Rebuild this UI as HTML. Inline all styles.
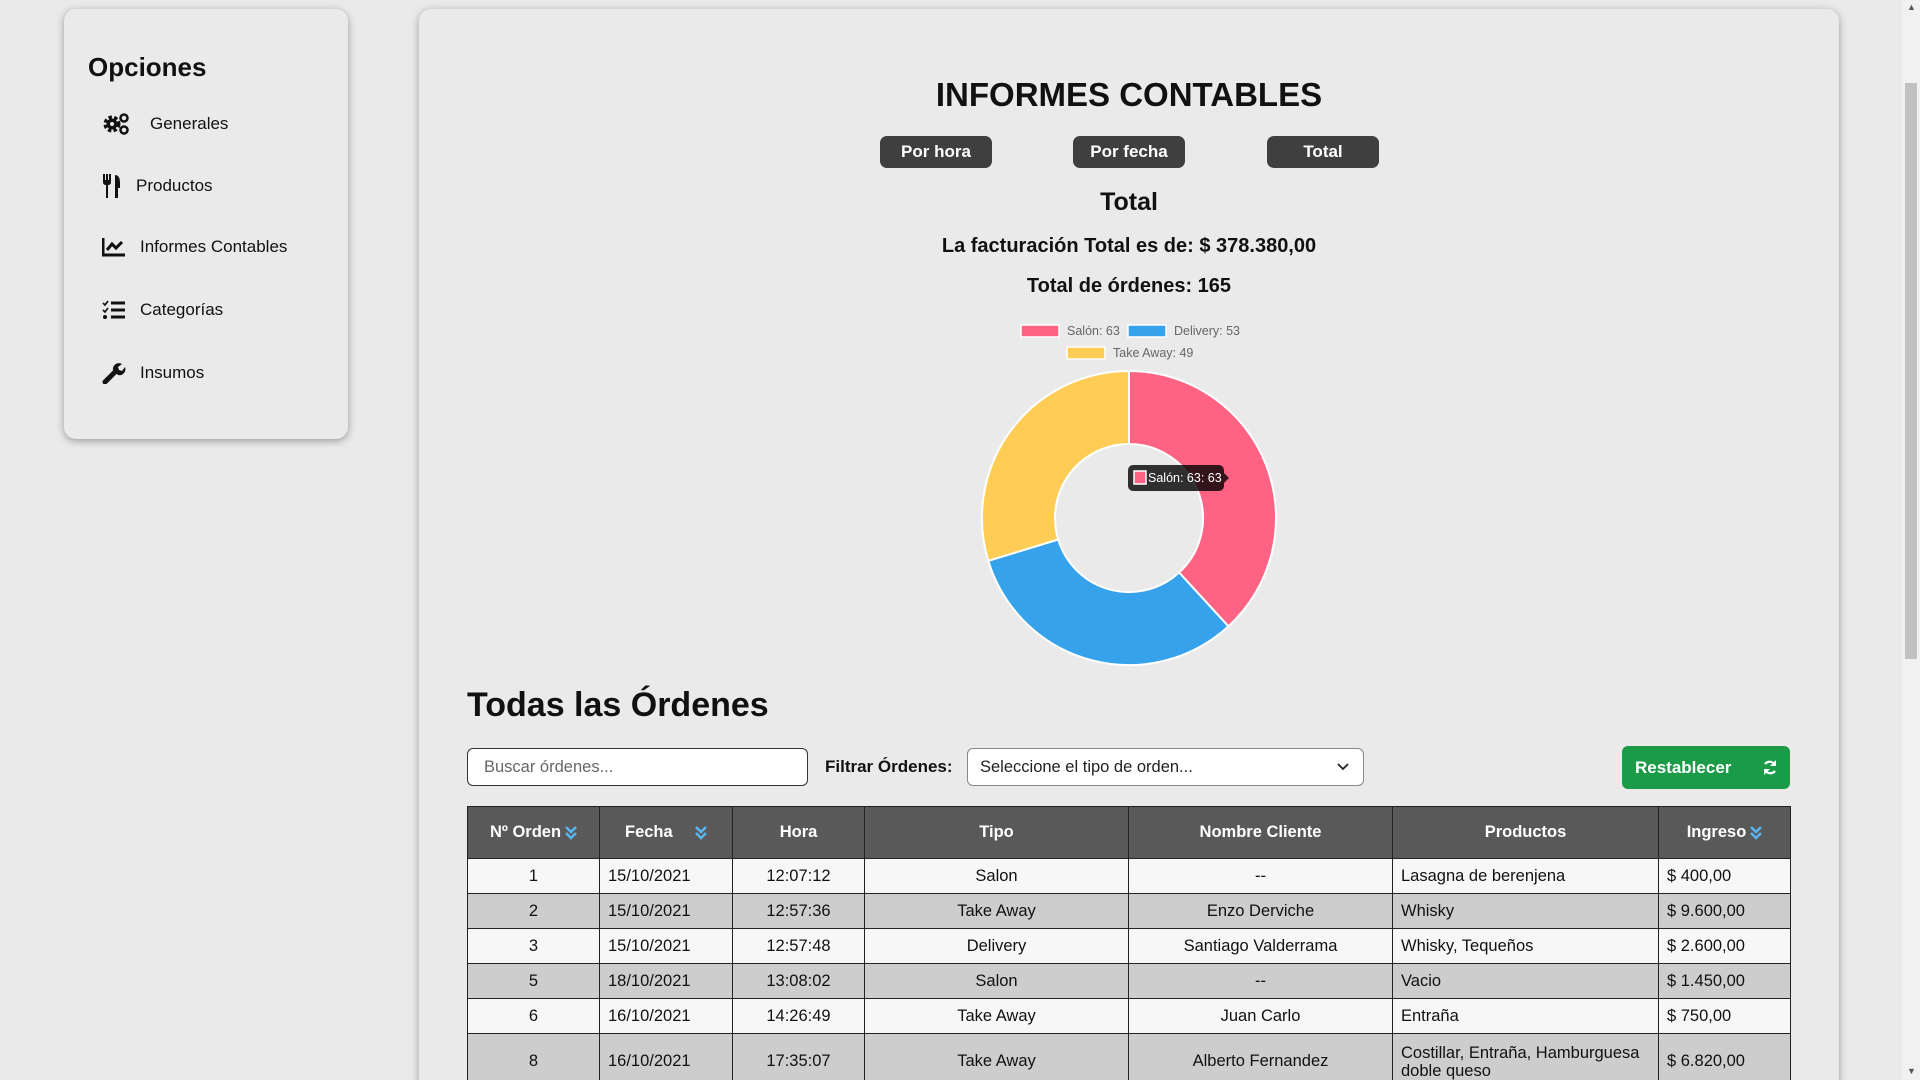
<!DOCTYPE html>
<html><head><meta charset="utf-8">
<style>
*{margin:0;padding:0;box-sizing:border-box}
html{width:1920px;height:1080px;overflow:hidden}
body{width:1920px;height:1080px;overflow:hidden;background:#eaeaea;font-family:"Liberation Sans",sans-serif;color:#111;position:relative}
.abs{position:absolute}
.side{left:64px;top:9px;width:284px;height:430px;background:#eaeaea;border-radius:12px;box-shadow:0 2px 8px rgba(0,0,0,.35)}
.side h2{position:absolute;left:24px;top:43px;font-size:26px;font-weight:bold}
.item{position:absolute;left:38px;font-size:17px;display:flex;align-items:center}
.item svg{margin-right:14px}
.main{left:419px;top:9px;width:1420px;height:1090px;background:#eaeaea;border-radius:12px;box-shadow:0 2px 8px rgba(0,0,0,.35)}
.c{position:absolute;left:419px;width:1420px;text-align:center;font-weight:bold}
.btn{position:absolute;top:136px;width:112px;height:32px;background:#3f3f3f;color:#fff;border-radius:7px;font-weight:bold;font-size:17px;text-align:center;line-height:32px}
.sb{left:1902px;top:0;width:18px;height:1080px;background:#f1f1f1}
.tw{position:absolute;left:467px;top:806px;width:1330px;height:274px;overflow:hidden}
table{border-collapse:collapse;font-size:16.5px}
td,th{border:1.5px solid #222;height:35px;padding:0 8px;text-align:center}
th{background:#595959;color:#fff;height:52px;font-size:16.5px}
tr.a td{background:#f7f7f7}tr.b td{background:#cdcdcd}
td.l{text-align:left}
.ch{vertical-align:middle;margin-left:4px}
</style></head><body>
<div class="abs side">
<h2>Opciones</h2>
<div class="item" style="top:104px"><svg width="28" height="22" viewBox="0 0 28 22"><circle cx="10" cy="11" r="6" fill="none" stroke="#111" stroke-width="5" stroke-dasharray="3 2"/><circle cx="10" cy="11" r="5.5" fill="#111"/><circle cx="10" cy="11" r="2" fill="#eaeaea"/><circle cx="22" cy="5" r="3.5" fill="none" stroke="#111" stroke-width="2.5"/><circle cx="22" cy="17" r="3.5" fill="none" stroke="#111" stroke-width="2.5"/></svg><span style="margin-left:6px">Generales</span></div>
<div class="item" style="top:165px"><svg width="20" height="24" viewBox="0 0 20 24"><path d="M1 0h2v6h1V0h2v6h1V0h2v8q0 3-3 3v13H4V11Q1 11 1 8Z" fill="#111"/><path d="M13 24V1q5 0 5 8v5h-2v10Z" fill="#111"/></svg>Productos</div>
<div class="item" style="top:228px"><svg width="24" height="20" viewBox="0 0 24 20"><path d="M1 1v17h22" fill="none" stroke="#111" stroke-width="3"/><path d="M5 13l5-6 4 4 6-6" fill="none" stroke="#111" stroke-width="3"/></svg>Informes Contables</div>
<div class="item" style="top:291px"><svg width="24" height="20" viewBox="0 0 24 20"><path d="M1 3l2 2 3-4M1 10l2 2 3-4" fill="none" stroke="#111" stroke-width="1.6"/><circle cx="3" cy="17" r="2" fill="#111"/><path d="M9 3h14M9 10h14M9 17h14" stroke="#111" stroke-width="3"/></svg>Categorías</div>
<div class="item" style="top:353px"><svg width="24" height="22" viewBox="0 0 24 22"><path d="M3 20L13 10" stroke="#111" stroke-width="5" stroke-linecap="round"/><path d="M11 8a6 6 0 0 1 9-6l-4 3 1 3 3 1 3-4a6 6 0 0 1-7 8Z" fill="#111"/></svg>Insumos</div>
</div>

<div class="abs main"></div>
<div class="c" style="top:76px;font-size:33px">INFORMES CONTABLES</div>
<div class="btn" style="left:880px">Por hora</div>
<div class="btn" style="left:1073px">Por fecha</div>
<div class="btn" style="left:1267px">Total</div>
<div class="c" style="top:188px;font-size:25px">Total</div>
<div class="c" style="top:235px;font-size:20px">La facturación Total es de: $ 378.380,00</div>
<div class="c" style="top:275px;font-size:20px">Total de órdenes: 165</div>

<svg class="abs" style="left:0;top:0" width="1920" height="1080">
<g font-family="Liberation Sans, sans-serif" font-size="12.5" fill="#666">
<rect x="1021" y="325" width="38" height="12" fill="#ff6384" stroke="#fff" stroke-width="1.5"/><text x="1067" y="335">Salón: 63</text>
<rect x="1128" y="325" width="38" height="12" fill="#36a2eb" stroke="#fff" stroke-width="1.5"/><text x="1174" y="335">Delivery: 53</text>
<rect x="1067" y="347" width="38" height="12" fill="#ffcd56" stroke="#fff" stroke-width="1.5"/><text x="1113" y="357">Take Away: 49</text>
</g>
<g stroke="#fff" stroke-width="2">
<path d="M1129,371 A147,147 0 0 1 1228.4,626.3 L1179.1,572.5 A74,74 0 0 0 1129,444 Z" fill="#ff6384"/>
<path d="M1228.4,626.3 A147,147 0 0 1 988.3,560.8 L1058.2,539.5 A74,74 0 0 0 1179.1,572.5 Z" fill="#36a2eb"/>
<path d="M988.3,560.8 A147,147 0 0 1 1129,371 L1129,444 A74,74 0 0 0 1058.2,539.5 Z" fill="#ffcd56"/>
</g>
<rect x="1128" y="465" width="96" height="26" rx="5" fill="rgba(0,0,0,.8)"/>
<path d="M1224,473 l5,5 -5,5Z" fill="rgba(0,0,0,.8)"/>
<rect x="1134" y="471" width="12" height="13" fill="#ff6384" stroke="#fff" stroke-width="1.5"/>
<text x="1148" y="482" font-family="Liberation Sans, sans-serif" font-size="12.5" fill="#fff">Salón: 63: 63</text>
</svg>

<div class="abs" style="left:467px;top:686px;font-size:34px;font-weight:bold">Todas las Órdenes</div>
<div class="abs" style="left:467px;top:748px;width:341px;height:38px;border:1.5px solid #333;border-radius:6px;background:#fff;font-size:16.5px;color:#666;padding:9px 16px">Buscar órdenes...</div>
<div class="abs" style="left:825px;top:757px;font-size:17px;font-weight:bold">Filtrar Órdenes:</div>
<div class="abs" style="left:967px;top:748px;width:397px;height:38px;border:1px solid #888;border-radius:6px;background:#fff;font-size:16.5px;color:#222;padding:9px 12px">Seleccione el tipo de orden...<svg class="abs" style="right:14px;top:14px" width="12" height="8" viewBox="0 0 12 8"><path d="M1 1l5 5 5-5" fill="none" stroke="#222" stroke-width="1.8"/></svg></div>
<div class="abs" style="left:1622px;top:746px;width:168px;height:43px;background:#1b9a47;border-radius:6px;color:#fff;font-weight:bold;font-size:17px;padding:12px 13px">Restablecer<svg class="abs" style="right:12px;top:13px" width="16" height="17" viewBox="0 0 16 17"><path d="M13 6A6 6 0 0 0 3 5M3 11a6 6 0 0 0 10 1" fill="none" stroke="#fff" stroke-width="2.2"/><path d="M14 1v6h-6ZM2 16v-6h6Z" fill="#fff"/></svg></div>

<div class="tw"><table>
<tr><th style="width:132px">Nº Orden<svg class="ch" width="12" height="16" viewBox="0 0 12 16"><path d="M1 2l5 5 5-5M1 8l5 5 5-5" fill="none" stroke="#5ab4f0" stroke-width="2.5"/></svg></th><th style="width:133px">Fecha &nbsp;&nbsp;&nbsp;<svg class="ch" width="12" height="16" viewBox="0 0 12 16"><path d="M1 2l5 5 5-5M1 8l5 5 5-5" fill="none" stroke="#5ab4f0" stroke-width="2.5"/></svg></th><th style="width:132px">Hora</th><th style="width:264px">Tipo</th><th style="width:264px">Nombre Cliente</th><th style="width:266px">Productos</th><th style="width:132px">Ingreso<svg class="ch" width="12" height="16" viewBox="0 0 12 16"><path d="M1 2l5 5 5-5M1 8l5 5 5-5" fill="none" stroke="#5ab4f0" stroke-width="2.5"/></svg></th></tr>
<tr class="a"><td>1</td><td class="l">15/10/2021</td><td>12:07:12</td><td>Salon</td><td>--</td><td class="l">Lasagna de berenjena</td><td class="l">$ 400,00</td></tr>
<tr class="b"><td>2</td><td class="l">15/10/2021</td><td>12:57:36</td><td>Take Away</td><td>Enzo Derviche</td><td class="l">Whisky</td><td class="l">$ 9.600,00</td></tr>
<tr class="a"><td>3</td><td class="l">15/10/2021</td><td>12:57:48</td><td>Delivery</td><td>Santiago Valderrama</td><td class="l">Whisky, Tequeños</td><td class="l">$ 2.600,00</td></tr>
<tr class="b"><td>5</td><td class="l">18/10/2021</td><td>13:08:02</td><td>Salon</td><td>--</td><td class="l">Vacio</td><td class="l">$ 1.450,00</td></tr>
<tr class="a"><td>6</td><td class="l">16/10/2021</td><td>14:26:49</td><td>Take Away</td><td>Juan Carlo</td><td class="l">Entraña</td><td class="l">$ 750,00</td></tr>
<tr class="b"><td style="height:56px">8</td><td class="l">16/10/2021</td><td>17:35:07</td><td>Take Away</td><td>Alberto Fernandez</td><td class="l" style="line-height:18px">Costillar, Entraña, Hamburguesa doble queso</td><td class="l">$ 6.820,00</td></tr>
</table></div>

<div class="abs sb"><div class="abs" style="left:3px;top:83px;width:12px;height:576px;background:#c1c1c1"></div>
<div class="abs" style="left:5px;top:2px;font-size:9px;color:#555">&#9650;</div><div class="abs" style="left:5px;top:1066px;font-size:9px;color:#555">&#9660;</div></div>
</body></html>
